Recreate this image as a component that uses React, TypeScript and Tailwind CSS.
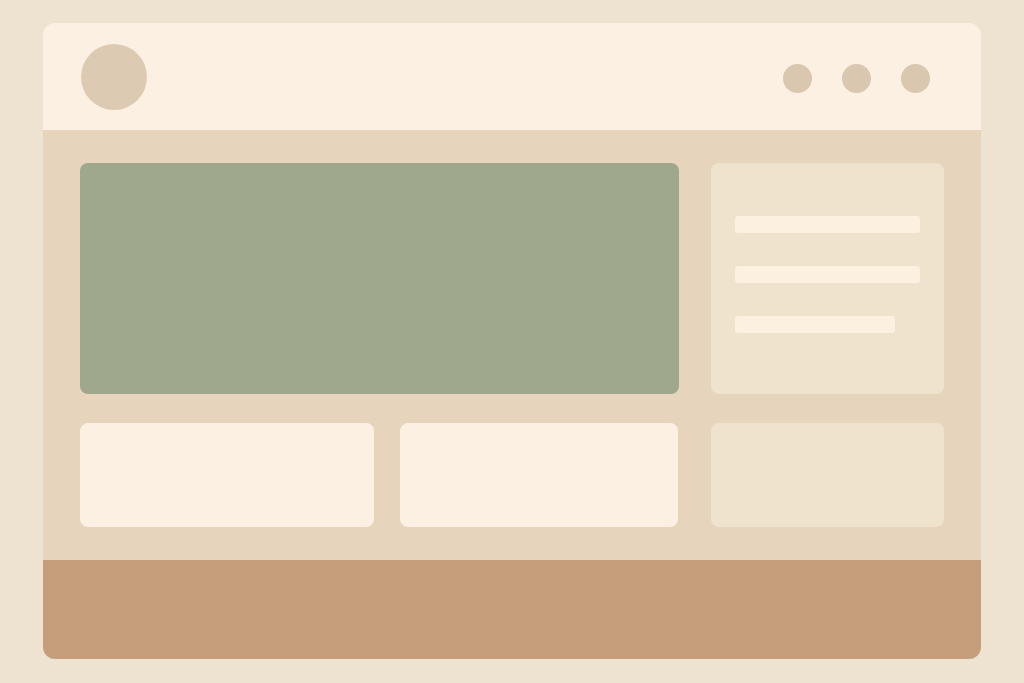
export default function App() {
  return (
    <div className="flex h-[683px] w-[1024px] items-start bg-[#eee2d0] pl-[43px] pt-[23px]">
      <div className="flex h-[636px] w-[938px] flex-col overflow-hidden rounded-[12px]">
        {/* header */}
        <div className="flex h-[107px] items-center justify-between bg-[#fbf0e1] pl-[38px] pr-[51px]">
          <div className="mt-[1px] h-[66px] w-[66px] rounded-full bg-[#dccab2]" />
          <div className="mt-[3px] flex items-center gap-[30px]">
            <div className="h-[29px] w-[29px] rounded-full bg-[#d9c7af]" />
            <div className="h-[29px] w-[29px] rounded-full bg-[#d9c7af]" />
            <div className="h-[29px] w-[29px] rounded-full bg-[#d9c7af]" />
          </div>
        </div>

        {/* body */}
        <div className="flex h-[430px] flex-col gap-[29px] bg-[#e6d5bc] px-[37px] pt-[33px]">
          <div className="flex h-[231px] gap-[32px]">
            <div className="w-[599px] rounded-[8px] bg-[#9fa88c]" />
            <div className="flex w-[233px] flex-col gap-[33px] rounded-[8px] bg-[#f0e3cd] pl-[24px] pt-[53px]">
              <div className="h-[17px] w-[185px] rounded-[3px] bg-[#fcf0e0]" />
              <div className="h-[17px] w-[185px] rounded-[3px] bg-[#fcf0e0]" />
              <div className="h-[17px] w-[160px] rounded-[3px] bg-[#fcf0e0]" />
            </div>
          </div>
          <div className="flex h-[104px]">
            <div className="w-[294px] rounded-[8px] bg-[#fbf0e1]" />
            <div className="ml-[26px] w-[278px] rounded-[8px] bg-[#fbf0e1]" />
            <div className="ml-[33px] w-[233px] rounded-[8px] bg-[#f0e3cd]" />
          </div>
        </div>

        {/* footer */}
        <div className="flex-1 bg-[#c69e7b]" />
      </div>
    </div>
  );
}
